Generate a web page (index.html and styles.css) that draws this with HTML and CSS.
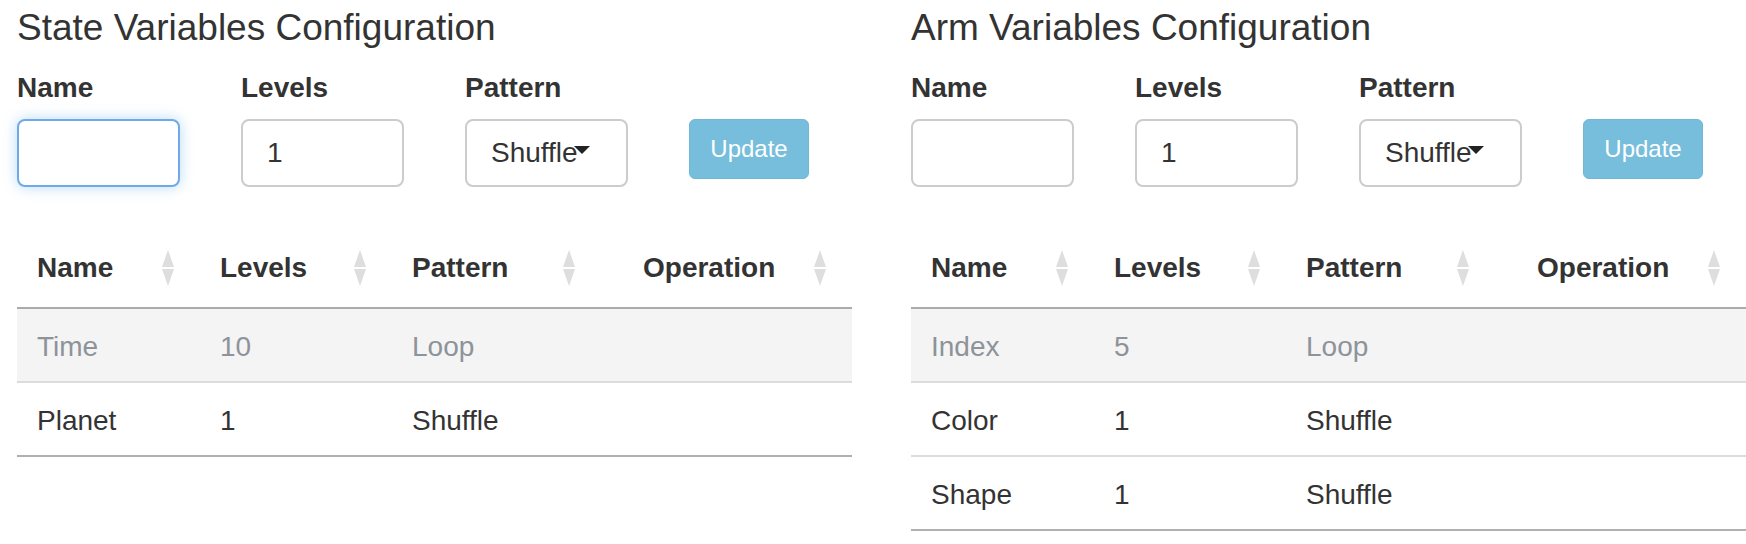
FILE: index.html
```html
<!DOCTYPE html>
<html lang="en">
<head>
<meta charset="utf-8">
<title>Variables Configuration</title>
<link rel="stylesheet" href="styles.css">
</head>
<body>
<div class="page">
  <section class="panel">
    <h4 class="title">State Variables Configuration</h4>
    <div class="form-row">
      <div class="field">
        <label class="label">Name</label>
        <input class="control focus" type="text" value="">
      </div>
      <div class="field">
        <label class="label">Levels</label>
        <input class="control" type="text" value="1">
      </div>
      <div class="field">
        <label class="label">Pattern</label>
        <div class="control select"><span>Shuffle</span><span class="caret"></span></div>
      </div>
      <div class="field">
        <span class="label">&nbsp;</span>
        <button class="btn" type="button">Update</button>
      </div>
    </div>
    <table class="grid">
      <colgroup><col class="c1"><col class="c2"><col class="c3"><col class="c4"></colgroup>
      <thead>
        <tr>
          <th><div class="th"><span>Name</span><svg class="sort" viewBox="0 0 14 36" width="14" height="36"><path d="M7 0L13 17H1Z"/><path d="M1 19H13L7 36Z"/></svg></div></th>
          <th><div class="th"><span>Levels</span><svg class="sort" viewBox="0 0 14 36" width="14" height="36"><path d="M7 0L13 17H1Z"/><path d="M1 19H13L7 36Z"/></svg></div></th>
          <th><div class="th"><span>Pattern</span><svg class="sort" viewBox="0 0 14 36" width="14" height="36"><path d="M7 0L13 17H1Z"/><path d="M1 19H13L7 36Z"/></svg></div></th>
          <th class="op"><div class="th"><span>Operation</span><svg class="sort" viewBox="0 0 14 36" width="14" height="36"><path d="M7 0L13 17H1Z"/><path d="M1 19H13L7 36Z"/></svg></div></th>
        </tr>
      </thead>
      <tbody>
        <tr class="fixed"><td>Time</td><td>10</td><td>Loop</td><td></td></tr>
        <tr><td>Planet</td><td>1</td><td>Shuffle</td><td></td></tr>
      </tbody>
    </table>
  </section>

  <section class="panel">
    <h4 class="title">Arm Variables Configuration</h4>
    <div class="form-row">
      <div class="field">
        <label class="label">Name</label>
        <input class="control" type="text" value="">
      </div>
      <div class="field">
        <label class="label">Levels</label>
        <input class="control" type="text" value="1">
      </div>
      <div class="field">
        <label class="label">Pattern</label>
        <div class="control select"><span>Shuffle</span><span class="caret"></span></div>
      </div>
      <div class="field">
        <span class="label">&nbsp;</span>
        <button class="btn" type="button">Update</button>
      </div>
    </div>
    <table class="grid">
      <colgroup><col class="c1"><col class="c2"><col class="c3"><col class="c4"></colgroup>
      <thead>
        <tr>
          <th><div class="th"><span>Name</span><svg class="sort" viewBox="0 0 14 36" width="14" height="36"><path d="M7 0L13 17H1Z"/><path d="M1 19H13L7 36Z"/></svg></div></th>
          <th><div class="th"><span>Levels</span><svg class="sort" viewBox="0 0 14 36" width="14" height="36"><path d="M7 0L13 17H1Z"/><path d="M1 19H13L7 36Z"/></svg></div></th>
          <th><div class="th"><span>Pattern</span><svg class="sort" viewBox="0 0 14 36" width="14" height="36"><path d="M7 0L13 17H1Z"/><path d="M1 19H13L7 36Z"/></svg></div></th>
          <th class="op"><div class="th"><span>Operation</span><svg class="sort" viewBox="0 0 14 36" width="14" height="36"><path d="M7 0L13 17H1Z"/><path d="M1 19H13L7 36Z"/></svg></div></th>
        </tr>
      </thead>
      <tbody>
        <tr class="fixed"><td>Index</td><td>5</td><td>Loop</td><td></td></tr>
        <tr><td>Color</td><td>1</td><td>Shuffle</td><td></td></tr>
        <tr><td>Shape</td><td>1</td><td>Shuffle</td><td></td></tr>
      </tbody>
    </table>
  </section>
</div>
</body>
</html>
```

FILE: styles.css
```css
* { box-sizing: border-box; }

html, body {
  margin: 0;
  background: #fff;
}

body {
  font-family: "Liberation Sans", Arial, Helvetica, sans-serif;
  font-size: 28px;
  line-height: 40px;
  color: #333;
  overflow: hidden;
}

.page {
  display: grid;
  grid-template-columns: 835px 835px;
  column-gap: 59px;
  padding: 8px 0 0 17px;
}

.title {
  margin: 0;
  font-size: 37px;
  font-weight: 400;
  line-height: 40px;
  color: #333;
}

.form-row {
  display: grid;
  grid-template-columns: 163px 163px 163px 120px;
  column-gap: 61px;
  margin-top: 20px;
}

.field {
  display: flex;
  flex-direction: column;
  align-items: flex-start;
}

.label {
  display: block;
  font-weight: 700;
  font-size: 28px;
  line-height: 40px;
  margin-bottom: 11px;
  color: #333;
}

.control {
  width: 163px;
  height: 68px;
  padding: 0 24px;
  border: 2px solid #ccc;
  border-radius: 8px;
  background: #fff;
  font-family: inherit;
  font-size: 28px;
  color: #333;
  outline: none;
}

.control.focus {
  border-color: #6eaaea;
  box-shadow: 0 0 14px rgba(102, 175, 233, 0.45);
}

.select {
  display: flex;
  align-items: center;
}

.caret {
  width: 0;
  height: 0;
  margin-left: -4px;
  margin-top: -6px;
  border-left: 8px solid transparent;
  border-right: 8px solid transparent;
  border-top: 8px solid #222;
}

.btn {
  width: 120px;
  height: 60px;
  padding: 0;
  border: 1px solid #6fb8d9;
  border-radius: 6px;
  background: #77bddc;
  color: #fff;
  font-family: inherit;
  font-size: 24px;
  line-height: 1;
}

.grid {
  width: 835px;
  margin-top: 38px;
  border-collapse: collapse;
  table-layout: fixed;
}

.c1 { width: 183px; }
.c2 { width: 192px; }
.c3 { width: 209px; }
.c4 { width: 251px; }

.grid th {
  padding: 23px 25px 19px 20px;
  text-align: left;
  font-weight: 700;
  border-bottom: 2px solid #ababab;
}

.grid th.op {
  padding-left: 42px;
}

.th {
  display: flex;
  align-items: center;
  justify-content: space-between;
}

.sort {
  display: block;
  flex: none;
  fill: #dedede;
}

.grid td {
  padding: 18px 20px 14px;
  border-bottom: 2px solid #dcdcdc;
  white-space: nowrap;
}

.grid tbody tr:last-child td {
  border-bottom-color: #b0b0b0;
}

.grid tr.fixed td {
  background: #f4f4f4;
  color: #8d9399;
}
```
